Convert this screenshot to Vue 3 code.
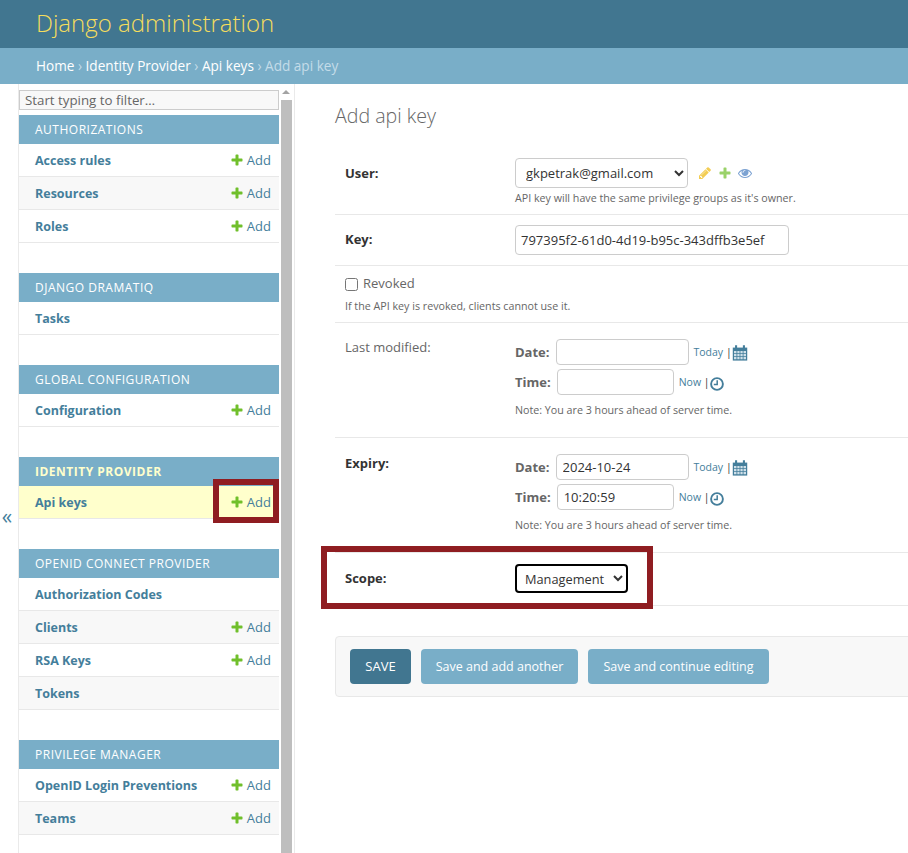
<template>
  <div class="page">
    <header class="topbar">
      <h1>Django administration</h1>
    </header>
    <div class="breadcrumbs">
      <a>Home</a><span class="sep"> › </span><a>Identity Provider</a><span class="sep"> › </span><a>Api keys</a><span class="sep"> › </span><span class="current">Add api key</span>
    </div>

    <div class="layout">
      <aside class="sidebar">
        <div class="toggle"><span>«</span></div>
        <nav class="nav">
          <input class="filter" placeholder="Start typing to filter…" />
          <section v-for="mod in modules" :key="mod.name" class="module">
            <div class="caption" :class="{ active: mod.active }">{{ mod.name }}</div>
            <div
              v-for="(row, i) in mod.rows"
              :key="row.name"
              class="row"
              :class="{ alt: i % 2 === 1, selected: row.selected }"
            >
              <a class="model">{{ row.name }}</a>
              <a v-if="row.add" class="addlink">
                <svg class="plus" viewBox="0 0 1792 1792"><path :d="plusPath" /></svg>Add
              </a>
            </div>
          </section>
        </nav>
        <div class="scrollbar">
          <div class="arrow"></div>
          <div class="thumb"></div>
        </div>
      </aside>

      <main class="content">
        <h2>Add api key</h2>

        <div class="field user-field">
          <div class="line">
            <label class="req">User:</label>
            <div>
              <div class="inline">
                <select class="select user"><option>gkpetrak@gmail.com</option></select>
                <svg class="rel pencil" viewBox="0 0 1792 1792"><path d="M491 1536l91-91-235-235-91 91v107h128v128h107zm523-928q0-22-22-22-10 0-17 7l-542 542q-7 7-7 17 0 22 22 22 10 0 17-7l542-542q7-7 7-17zm-54-192l416 416-832 832h-416v-416zm683 96q0 53-37 90l-166 166-416-416 166-165q36-38 90-38 53 0 91 38l235 234q37 39 37 91z" /></svg>
                <svg class="rel plus-rel" viewBox="0 0 1792 1792"><path :d="plusPath" /></svg>
                <svg class="rel eye" viewBox="0 0 1792 1792"><path d="M1664 960q-152-236-381-353 61 104 61 225 0 185-131.500 316.500t-316.500 131.500-316.500-131.500-131.500-316.500q0-121 61-225-229 117-381 353 133 205 333.500 326.500t434.500 121.500 434.500-121.500 333.500-326.500zm-720-384q0-20-14-34t-34-14q-125 0-214.500 89.500t-89.500 214.500q0 20 14 34t34 14 34-14 14-34q0-86 61-147t147-61q20 0 34-14t14-34zm848 384q0 34-20 69-140 230-376.500 368.500t-499.500 138.500-499.500-139-376.500-368q-20-35-20-69t20-69q140-229 376.500-368t499.500-139 499.500 139 376.500 368q20 35 20 69z" /></svg>
              </div>
              <p class="help first">API key will have the same privilege groups as it's owner.</p>
            </div>
          </div>
        </div>

        <div class="field">
          <div class="line">
            <label class="req key-label">Key:</label>
            <input class="text key" value="797395f2-61d0-4d19-b95c-343dffb3e5ef" />
          </div>
        </div>

        <div class="field check-field">
          <div class="check">
            <input type="checkbox" />
            <span>Revoked</span>
          </div>
          <p class="help">If the API key is revoked, clients cannot use it.</p>
        </div>

        <div v-for="dt in dates" :key="dt.label" class="field dates">
          <div class="line">
            <label :class="{ req: dt.bold }" class="dt-label">{{ dt.label }}</label>
            <div>
              <div class="dt-row">
                <span class="dt-name">Date:</span>
                <input class="text date" :value="dt.date" />
                <span class="shortcuts"><a>Today</a> <i>|</i></span>
                <svg class="cal" viewBox="1 0.500 14 15.500">
                  <path d="M1 3h14v12.600H1z" fill="#447e9b" />
                  <path d="M3.200 .8h2v3.600h-2zM10.800 .8h2v3.600h-2z" fill="#447e9b" />
                  <path d="M2.200 6.400h2.400v2h-2.400zM5.400 6.400h2.200v2H5.400zM8.400 6.400h2.200v2H8.400zM11.400 6.400h2.400v2h-2.400zM2.200 9.200h2.400v2h-2.400zM5.400 9.200h2.200v2H5.400zM8.400 9.200h2.200v2H8.400zM11.400 9.200h2.400v2h-2.400zM2.200 12h2.400v2.400h-2.400zM5.400 12h2.200v2.400H5.400zM8.400 12h2.200v2.400H8.400zM11.400 12h2.400v2.400h-2.400z" fill="#cfe0e9" />
                </svg>
              </div>
              <div class="dt-row">
                <span class="dt-name">Time:</span>
                <input class="text time" :value="dt.time" />
                <span class="shortcuts"><a>Now</a> <i>|</i></span>
                <svg class="clock" viewBox="0 0 14 14">
                  <circle cx="7" cy="7" r="5.900" fill="none" stroke="#447e9b" stroke-width="1.900" />
                  <path d="M7.200 3.200v4.400H3.800" fill="none" stroke="#447e9b" stroke-width="1.500" />
                </svg>
              </div>
              <p class="help note">Note: You are 3 hours ahead of server time.</p>
            </div>
          </div>
        </div>

        <div class="field scope">
          <div class="line">
            <label class="req">Scope:</label>
            <select class="select scope-select"><option>Management</option></select>
          </div>
        </div>

        <div class="submit-row">
          <button class="btn default">SAVE</button>
          <button class="btn add-another">Save and add another</button>
          <button class="btn continue">Save and continue editing</button>
        </div>
      </main>
    </div>

    <div class="mark mark-add"></div>
    <div class="mark mark-scope"></div>
  </div>
</template>

<script setup>
const plusPath =
  'M1600 796v192q0 40-28 68t-68 28h-416v416q0 40-28 68t-68 28h-192q-40 0-68-28t-28-68v-416h-416q-40 0-68-28t-28-68v-192q0-40 28-68t68-28h416v-416q0-40 28-68t68-28h192q40 0 68 28t28 68v416h416q40 0 68 28t28 68z'

const modules = [
  {
    name: 'AUTHORIZATIONS',
    rows: [
      { name: 'Access rules', add: true },
      { name: 'Resources', add: true },
      { name: 'Roles', add: true },
    ],
  },
  { name: 'DJANGO DRAMATIQ', rows: [{ name: 'Tasks' }] },
  { name: 'GLOBAL CONFIGURATION', rows: [{ name: 'Configuration', add: true }] },
  {
    name: 'IDENTITY PROVIDER',
    active: true,
    rows: [{ name: 'Api keys', add: true, selected: true }],
  },
  {
    name: 'OPENID CONNECT PROVIDER',
    rows: [
      { name: 'Authorization Codes' },
      { name: 'Clients', add: true },
      { name: 'RSA Keys', add: true },
      { name: 'Tokens' },
    ],
  },
  {
    name: 'PRIVILEGE MANAGER',
    rows: [
      { name: 'OpenID Login Preventions', add: true },
      { name: 'Teams', add: true },
    ],
  },
]

const dates = [
  { label: 'Last modified:', bold: false, date: '', time: '' },
  { label: 'Expiry:', bold: true, date: '2024-10-24', time: '10:20:59' },
]
</script>

<style>
html,
body {
  margin: 0;
  overflow: hidden;
}
</style>

<style scoped>
.page {
  position: relative;
  width: 908px;
  height: 853px;
  overflow: hidden;
  background: #fff;
  color: #333;
  font-family: "Open Sans", "Noto Sans", sans-serif;
  font-size: 13px;
}

.topbar {
  height: 48px;
  box-sizing: border-box;
  background: #417690;
  padding: 0 0 3px 36px;
  display: flex;
  align-items: center;
}

.topbar h1 {
  margin: 0;
  font-size: 24px;
  font-weight: 300;
  color: #f5dd5d;
}

.breadcrumbs {
  height: 36px;
  line-height: 36px;
  background: #79aec8;
  padding-left: 36px;
  font-size: 13.600px;
  color: #fff;
  white-space: pre;
}

.breadcrumbs .sep,
.breadcrumbs .current {
  color: #c4dce8;
}

.layout {
  display: flex;
  height: 769px;
}

.sidebar {
  display: flex;
  width: 294px;
  flex: none;
  border-right: 1px solid #eaeaea;
  overflow: hidden;
}

.toggle {
  width: 19px;
  flex: none;
  border-right: 1px solid #eaeaea;
  box-sizing: border-box;
  color: #447e9b;
  font-size: 21px;
  line-height: 24px;
  text-align: center;
  padding: 420px 4px 0 0;
}

.nav {
  width: 260px;
  flex: none;
  padding-top: 6px;
}

.filter {
  display: block;
  width: 260px;
  height: 20px;
  box-sizing: border-box;
  margin: 0 0 5px;
  padding: 0 5px;
  border: 1px solid #ccc;
  background: #f8f8f8;
  font: inherit;
  font-size: 13.300px;
}

.filter::placeholder {
  color: #666;
}

.module {
  margin-bottom: 30px;
}

.caption {
  height: 29px;
  line-height: 29px;
  padding-left: 16px;
  background: #79aec8;
  color: #fff;
  font-size: 12px;
  letter-spacing: 0.500px;
}

.caption.active {
  color: #ffc;
  font-weight: 700;
}

.row {
  height: 33px;
  box-sizing: border-box;
  border-bottom: 1px solid #e8e8e8;
  display: flex;
  align-items: center;
  justify-content: space-between;
  padding: 0 8px 0 16px;
}

.row.alt {
  background: #f8f8f8;
}

.row.selected {
  background: #ffc;
}

.model {
  color: #447e9b;
  font-weight: 700;
  font-size: 12.500px;
}

.addlink {
  display: flex;
  align-items: center;
  color: #447e9b;
}

.plus {
  width: 14px;
  height: 14px;
  margin-right: 3px;
  fill: #70bf2b;
}

.scrollbar {
  width: 12px;
  margin-left: 1px;
  padding-top: 3px;
  flex: none;
  display: flex;
  flex-direction: column;
  align-items: center;
}

.arrow {
  width: 0;
  height: 0;
  border-left: 4px solid transparent;
  border-right: 4px solid transparent;
  border-bottom: 4px solid #a3a3a3;
  margin: 3px 0 6px;
}

.thumb {
  width: 11px;
  flex: 1;
  background: #bebebe;
}

.content {
  flex: 1;
  min-width: 0;
  padding: 0 0 0 40px;
}

.content h2 {
  margin: 20px 0 20px;
  font-size: 19.600px;
  line-height: 24px;
  font-weight: 300;
  color: #666;
}

.field {
  border-bottom: 1px solid #e8e8e8;
  padding: 10px;
}

.user-field {
  padding-bottom: 9px;
}

.line {
  display: flex;
  align-items: flex-start;
}

.line > label {
  width: 170px;
  flex: none;
  line-height: 30px;
}

.line > .key-label {
  line-height: 29px;
}

.req {
  font-weight: 700;
}

.inline {
  display: flex;
  align-items: center;
}

.select {
  height: 30px;
  box-sizing: border-box;
  border: 1px solid #ccc;
  border-radius: 4px;
  background: #fff;
  color: #333;
  font: inherit;
  padding: 0 6px;
}

.user {
  width: 173px;
}

.rel {
  height: 14px;
  opacity: 0.7;
}

.pencil {
  width: 14px;
  margin-left: 10px;
  fill: #efb80b;
}

.plus-rel {
  width: 14px;
  margin-left: 6px;
  fill: #70bf2b;
}

.eye {
  width: 14px;
  margin-left: 6px;
  fill: #447bc0;
}

.help {
  margin: 0;
  font-size: 10.700px;
  line-height: 14px;
  color: #666;
}

.text {
  height: 30px;
  box-sizing: border-box;
  border: 1px solid #ccc;
  border-radius: 4px;
  background: #fff;
  color: #333;
  font: inherit;
  padding: 0 5px;
  display: block;
}

.key {
  width: 274px;
}

.check {
  display: flex;
  align-items: center;
  color: #666;
}

.check input {
  width: 13px;
  height: 13px;
  margin: 3px 5px 0 0;
}

.help.first {
  margin-top: 3px;
}

.check-field .help {
  margin-top: 7px;
}

.check-field {
  padding-top: 8px;
  height: 38px;
  padding-bottom: 10px;
}

.dates {
  height: 94px;
}

.dates .dt-label {
  line-height: 29px;
  color: #666;
}

.dates .dt-label.req {
  line-height: 30px;
  color: #333;
}

.dt-row {
  display: flex;
  align-items: center;
  height: 26px;
  margin: 6px 0 4px;
}

.dt-row + .dt-row {
  margin-top: 4px;
}

.dt-row .text {
  height: 26px;
  margin: 0 5px 0 0;
  padding: 0 6px;
}

.dt-name {
  font-weight: 700;
  color: #666;
  margin-right: 6px;
}

.date {
  width: 133px;
}

.time {
  width: 117px;
}

.shortcuts {
  font-size: 10.500px;
  color: #447e9b;
}

.shortcuts i {
  font-style: normal;
  color: #333;
}

.cal {
  width: 16px;
  height: 16px;
  margin-left: 0;
  margin-top: 2px;
}

.clock {
  width: 14px;
  height: 14px;
  margin-left: 0;
  margin-top: 4px;
}

.note {
  margin-top: 8px;
}

.scope {
  padding-top: 11px;
  height: 31px;
}

.scope .line > label {
  line-height: 28px;
}

.scope-select {
  width: 113px;
  height: 29px;
  border: 2px solid #000;
  border-radius: 4px;
  padding: 0 4px;
  font-size: 12.800px;
}

.submit-row {
  margin-top: 30px;
  width: 640px;
  height: 61px;
  box-sizing: border-box;
  padding: 12px 14px;
  background: #f8f8f8;
  border: 1px solid #e8e8e8;
  border-radius: 4px;
  display: flex;
  gap: 10px;
}

.btn {
  height: 35px;
  padding: 0;
  border: none;
  border-radius: 4px;
  background: #79aec8;
  color: #fff;
  font: inherit;
  font-size: 12.500px;
}

.btn.default {
  background: #417690;
  width: 61px;
  font-size: 13px;
  padding-bottom: 2px;
}

.add-another {
  width: 157px;
}

.continue {
  width: 181px;
}

.mark {
  position: absolute;
  box-sizing: border-box;
  border: 6px solid #8f1d21;
}

.mark-add {
  left: 213px;
  top: 479px;
  width: 66px;
  height: 44px;
}

.mark-scope {
  left: 321px;
  top: 546px;
  width: 332px;
  height: 63px;
}
</style>
